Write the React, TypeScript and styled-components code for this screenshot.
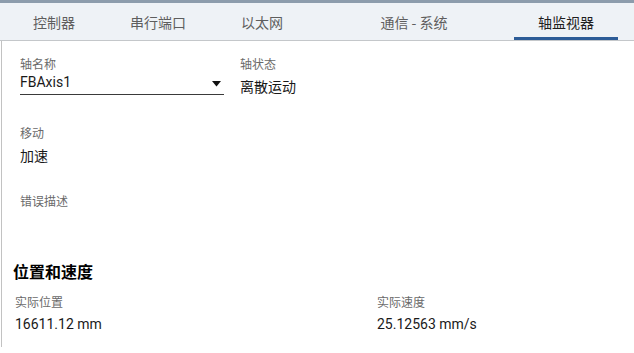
import React, { ReactElement } from "react";
import styled, { createGlobalStyle } from "styled-components";

const GlobalStyle = createGlobalStyle`
	html, body {
		margin: 0;
		padding: 0;
		background: #ffffff;
	}
	body {
		font-family: Roboto, "Noto Sans CJK SC", "DejaVu Sans", sans-serif;
		color: #1c1c1c;
	}
`;

const tabs = [
	{ label: "控制器", width: 104 },
	{ label: "串行端口", width: 104 },
	{ label: "以太网", width: 104 },
	{ label: "通信 - 系统", width: 200 },
	{ label: "轴监视器", width: 104 },
];

export default function App(): ReactElement {
	const activeTab = 4;

	return (
		<Page>
			<GlobalStyle />
			<TopStrip />
			<TabBar>
				{tabs.map((tab, i) => (
					<Tab key={tab.label} $width={tab.width} $active={i === activeTab}>
						{tab.label}
					</Tab>
				))}
			</TabBar>
			<Content>
				<AxisGroup>
					<FieldRow>
						<Field>
							<Label>轴名称</Label>
							<Select>
								<span>FBAxis1</span>
								<svg width="9" height="6" viewBox="0 0 9 6">
									<polygon points="0,0 9,0 4.5,5.5" fill="#111" />
								</svg>
							</Select>
						</Field>
						<Field>
							<Label>轴状态</Label>
							<Value>离散运动</Value>
						</Field>
					</FieldRow>
					<Field $gap={28}>
						<Label>移动</Label>
						<Value>加速</Value>
					</Field>
					<Field $gap={27}>
						<Label>错误描述</Label>
					</Field>
				</AxisGroup>
				<SectionTitle>位置和速度</SectionTitle>
				<PositionGrid>
					<Field>
						<Label>实际位置</Label>
						<Value $gap={4}>16611.12 mm</Value>
					</Field>
					<Field>
						<Label>实际速度</Label>
						<Value $gap={4}>25.12563 mm/s</Value>
					</Field>
				</PositionGrid>
			</Content>
		</Page>
	);
}

const Page = styled.div`
	width: 634px;
	height: 353px;
	overflow: hidden;
`;

const TopStrip = styled.div`
	height: 3px;
	background: #8c9cac;
`;

const TabBar = styled.div`
	display: flex;
	height: 37px;
	padding-left: 2px;
	background: #eef2f6;
	border-bottom: 1px solid #c4c7ca;
`;

const Tab = styled.div<{ $width: number; $active?: boolean }>`
	box-sizing: border-box;
	width: ${(p) => p.$width}px;
	display: flex;
	align-items: center;
	justify-content: center;
	padding-top: 3px;
	font-family: "Noto Sans CJK SC", sans-serif;
	font-size: 14px;
	color: ${(p) => (p.$active ? "#1e1e1e" : "#5e5e5e")};
	border-bottom: 3px solid ${(p) => (p.$active ? "#2c5c97" : "transparent")};
`;

const Content = styled.div`
	margin-left: 1px;
	border-left: 1px solid #c2c2c2;
	padding: 15px 0 13px 11px;
`;

const AxisGroup = styled.div`
	padding-left: 7px;
`;

const FieldRow = styled.div`
	display: grid;
	grid-template-columns: 220px 1fr;
`;

const Field = styled.div<{ $gap?: number }>`
	display: flex;
	flex-direction: column;
	align-items: flex-start;
	margin-top: ${(p) => p.$gap ?? 0}px;
`;

const Label = styled.div`
	font-family: "Noto Sans CJK SC", sans-serif;
	font-size: 12px;
	line-height: 16px;
	color: #6a6a6a;
`;

const Value = styled.div<{ $gap?: number }>`
	margin-top: ${(p) => p.$gap ?? 5}px;
	font-size: 14px;
	line-height: 20px;
	color: #1a1a1a;
`;

const Select = styled.div`
	box-sizing: border-box;
	width: 204px;
	display: flex;
	align-items: center;
	justify-content: space-between;
	padding: 0 3px 2px 0;
	font-size: 14px;
	line-height: 20px;
	color: #1a1a1a;
	border-bottom: 1px solid #3a3a3a;

	svg {
		margin-top: 4px;
	}
`;

const SectionTitle = styled.h2`
	margin: 51px 0 0;
	font-family: "Noto Sans CJK SC", sans-serif;
	font-size: 16px;
	line-height: 22px;
	font-weight: 700;
	color: #000;
`;

const PositionGrid = styled.div`
	display: grid;
	grid-template-columns: 362px 1fr;
	margin-top: 12px;
	padding-left: 2px;
`;
